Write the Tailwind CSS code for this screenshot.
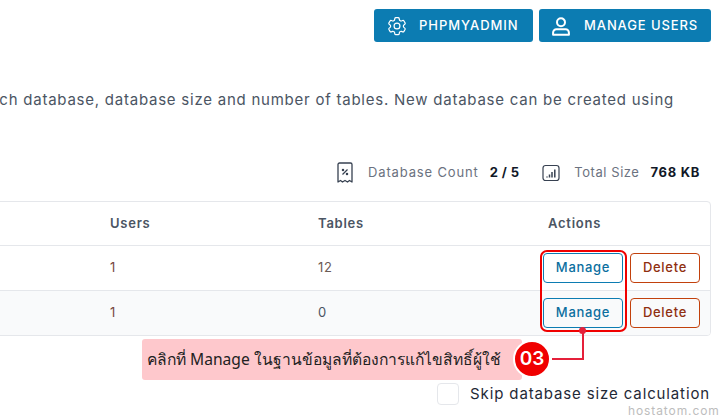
<!DOCTYPE html>
<html><head><meta charset="utf-8"><script src="https://cdn.jsdelivr.net/npm/@tailwindcss/browser@4"></script></head>
<body class="bg-white">
<div class="relative w-[720px] h-[420px] overflow-hidden font-['Inter','Noto_Sans',sans-serif]">
  <div class="flex justify-end gap-[6px] pt-[9px] pr-[9px]">
    <div class="flex items-center w-[159px] h-[33px] bg-[#0c7cb2] rounded-[3px] text-white text-[13px] font-medium tracking-[0.95px] pl-[12px]">
      <svg class="w-[22px] h-[22px] mr-[11px]" viewBox="0 0 24 24" fill="none" stroke="currentColor" stroke-width="1.300" stroke-linecap="round" stroke-linejoin="round"><path d="M9.6 3.9c.1-.6.6-1 1.2-1h2.400c.6 0 1.100.4 1.200 1l.2 1.300c.1.400.4.700.7.900l.5.300c.3.200.7.200 1.100.100l1.200-.5c.6-.2 1.200 0 1.500.5l1.200 2.100c.3.500.2 1.100-.3 1.500l-1 .8c-.3.200-.5.600-.5 1v.6c0 .4.200.8.500 1l1 .8c.5.400.6 1 .3 1.500l-1.200 2.100c-.3.500-.9.700-1.500.5l-1.200-.5c-.4-.1-.8-.1-1.100.1l-.5.3c-.3.200-.6.500-.7.900l-.2 1.300c-.1.600-.6 1-1.200 1h-2.400c-.6 0-1.100-.4-1.200-1l-.2-1.300c-.1-.4-.4-.7-.7-.9l-.5-.3c-.3-.2-.7-.2-1.100-.1l-1.200.5c-.6.200-1.200 0-1.500-.5l-1.200-2.100c-.3-.5-.2-1.100.3-1.500l1-.8c.3-.2.500-.6.500-1v-.6c0-.4-.2-.8-.5-1l-1-.8c-.5-.4-.6-1-.3-1.500l1.200-2.100c.3-.5.900-.7 1.500-.5l1.200.5c.4.100.8.100 1.100-.1l.5-.3c.3-.2.600-.5.700-.9z"/><circle cx="12" cy="12" r="3.200"/></svg>
      <span>PHPMYADMIN</span>
    </div>
    <div class="flex items-center w-[172px] h-[33px] bg-[#0c7cb2] rounded-[3px] text-white text-[13px] font-medium tracking-[0.9px] pl-[12px]">
      <svg class="w-[20px] h-[20px] mr-[13px]" viewBox="0 0 24 24" fill="none" stroke="currentColor" stroke-width="2.400" stroke-linecap="round" stroke-linejoin="round"><circle cx="12" cy="7.500" r="4.800"/><path d="M2.500 22.500v-2.500a4 4 0 0 1 4-4h11a4 4 0 0 1 4 4v2.500z"/></svg>
      <span>MANAGE USERS</span>
    </div>
  </div>
  <div class="flex justify-end pr-[46px] mt-[48px]">
    <p class="whitespace-nowrap text-[15px] leading-[20px] tracking-[0.76px] text-[#4b5563]">ch database, database size and number of tables. New database can be created using</p>
  </div>
  <div class="flex justify-end items-center pr-[20px] mt-[51px] h-[24px] text-[13px]">
    <svg class="w-[18px] h-[22px] mr-[14px] text-[#374151]" viewBox="0 0 18 22" fill="none" stroke="currentColor" stroke-width="1.300" stroke-linejoin="round"><path d="M2 2.500a1.500 1.500 0 0 1 1.500-1.500h11a1.500 1.500 0 0 1 1.500 1.500V20l-2.500-1.500L11.500 20 9 18.500 6.500 20 4.500 18.500 2 20z"/><path d="M6.500 12.500l5-5" /><circle cx="7" cy="8" r=".6"/><circle cx="11" cy="12" r=".6"/></svg>
    <span class="text-[#6b7280] mr-[11px] tracking-[0.85px]">Database Count</span>
    <span class="font-bold text-[#111827] mr-[23px] tracking-[0.4px]">2 / 5</span>
    <svg class="w-[18px] h-[18px] mr-[14px] text-[#374151]" viewBox="0 0 18 18" fill="none" stroke="currentColor" stroke-width="1.200"><rect x="1" y="1.500" width="16" height="15" rx="2.500"/><path d="M5 13.500v-1M7.500 13.500v-3M10 13.500v-5.500M12.800 13.500v-8" stroke-width="1.500"/></svg>
    <span class="text-[#6b7280] mr-[11px] tracking-[0.55px]">Total Size</span>
    <span class="font-bold text-[#111827] tracking-[0.7px]">768 KB</span>
  </div>
  <div class="ml-[-10px] mr-[9px] mt-[16px] border border-[#e5e7eb] rounded-[4px] overflow-hidden text-[13px]">
    <div class="grid grid-cols-[119px_208px_230px_1fr] h-[44px] items-center border-b border-[#e5e7eb] font-semibold text-[#4b5563] tracking-[0.75px]">
      <span></span><span>Users</span><span>Tables</span><span>Actions</span>
    </div>
    <div class="grid grid-cols-[119px_208px_230px_1fr] h-[45px] items-center border-b border-[#e5e7eb] text-[#78493f] tracking-[0.7px]">
      <span></span><span>1</span><span class="text-[#6b5b55]">12</span>
      <div class="flex gap-[7px] -ml-[5px]">
        <span class="flex items-center justify-center w-[80px] h-[30px] rounded-[4px] border border-[#0c7cb2] text-[#0c6f9f] font-medium">Manage</span>
        <span class="flex items-center justify-center w-[70px] h-[30px] rounded-[4px] border border-[#c2410c] text-[#8f2f10] font-medium">Delete</span>
      </div>
    </div>
    <div class="grid grid-cols-[119px_208px_230px_1fr] h-[44px] items-center bg-[#f9fafb] text-[#78493f] tracking-[0.7px]">
      <span></span><span>1</span><span class="text-[#4b5563]">0</span>
      <div class="flex gap-[7px] -ml-[5px]">
        <span class="flex items-center justify-center w-[80px] h-[30px] rounded-[4px] border border-[#0c7cb2] text-[#0c6f9f] font-medium">Manage</span>
        <span class="flex items-center justify-center w-[70px] h-[30px] rounded-[4px] border border-[#c2410c] text-[#8f2f10] font-medium">Delete</span>
      </div>
    </div>
  </div>
  <div class="flex justify-end items-center pr-[10px] mt-[47px]">
    <span class="w-[22px] h-[22px] rounded-[4px] border border-[#e5e7eb] bg-white mr-[11px]"></span>
    <span class="text-[15px] tracking-[0.87px] text-[#1f2937]">Skip database size calculation</span>
  </div>

  <div class="absolute left-[540px] top-[250px] w-[87px] h-[82px] border-2 border-[#f00000] rounded-[7px]"></div>
  <div class="absolute left-[142px] top-[339px] w-[380px] h-[41px] bg-[#fec8cc] rounded-[3px] flex items-center pl-[5px] text-[15.600px] text-[#222] whitespace-nowrap font-['Noto_Sans',sans-serif]">คลิกที่ Manage ในฐานข้อมูลที่ต้องการแก้ไขสิทธิ์ผู้ใช้</div>
  <div class="absolute left-[513px] top-[340px] w-[38px] h-[38px] rounded-full bg-[#f00000] border-2 border-white flex items-center justify-center text-white font-semibold text-[19px]">03</div>
  <div class="absolute left-[552px] top-[358px] w-[32px] h-[2px] bg-[#e5203a]"></div>
  <div class="absolute left-[582px] top-[330px] w-[2px] h-[30px] bg-[#e5203a]"></div>
  <div class="absolute left-[579px] top-[327px] w-[7px] h-[7px] rounded-full bg-[#e5203a]"></div>
  <div class="absolute left-[628px] top-[402px] text-[12px] tracking-[0.9px] text-[#bdbdbd]">hostatom.com</div>
</div>
</body></html>
